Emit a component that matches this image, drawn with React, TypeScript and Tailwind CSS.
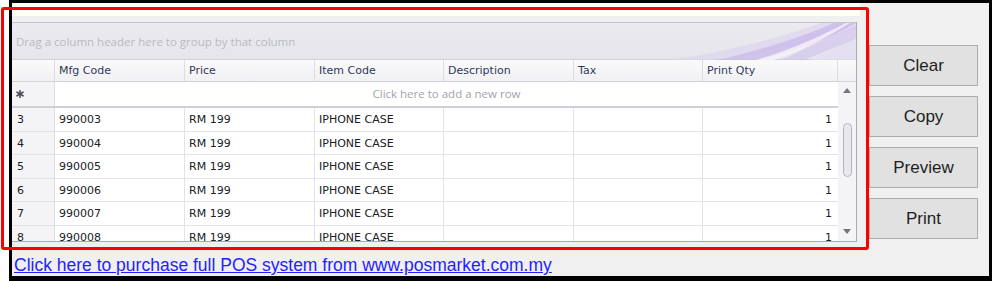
import React from "react";

const columns = [
  { label: "Mfg Code", width: "w-[130px]" },
  { label: "Price", width: "w-[130px]" },
  { label: "Item Code", width: "w-[129px]" },
  { label: "Description", width: "w-[130px]" },
  { label: "Tax", width: "w-[129px]" },
  { label: "Print Qty", width: "w-[135px]" },
];

const rows = [3, 4, 5, 6, 7, 8].map((n) => ({
  no: n,
  mfg: `99000${n}`,
  price: "RM 199",
  item: "IPHONE CASE",
  qty: 1,
}));

function Swoosh() {
  // purple "office 2010" decoration on the right of the group panel
  return (
    <svg className="absolute right-0 top-0" width="200" height="37" viewBox="0 0 200 37">
      <path d="M10 37 C70 30 125 14 165 0 L200 0 L200 5 C155 20 100 33 55 37 Z" fill="#ddd4f0" opacity="0.7" />
      <path d="M60 37 C105 28 150 12 178 0 L200 0 C172 17 135 30 100 37 Z" fill="#c8b8ea" opacity="0.75" />
      <path d="M100 37 C135 27 165 13 190 0 L194 0 C170 15 142 29 118 37 Z" fill="#f6f3fb" opacity="0.8" />
      <path d="M125 37 C150 26 172 13 200 3 L200 16 C178 25 160 32 148 37 Z" fill="#d2c5ee" opacity="0.7" />
      <path d="M155 37 C170 29 184 21 200 17 L200 37 Z" fill="#e4ddf4" opacity="0.7" />
    </svg>
  );
}

function Asterisk() {
  return (
    <svg width="8" height="8" viewBox="0 0 8 8">
      <g stroke="#4d4d58" strokeWidth="1.6" strokeLinecap="round">
        <line x1="4" y1="0.5" x2="4" y2="7.5" />
        <line x1="1" y1="2.2" x2="7" y2="5.8" />
        <line x1="1" y1="5.8" x2="7" y2="2.2" />
      </g>
    </svg>
  );
}

function Scrollbar() {
  return (
    <div className="w-[18px] shrink-0 bg-[#f4f4f7] flex flex-col items-center">
      <svg className="mt-[6px]" width="8" height="5" viewBox="0 0 8 5">
        <path d="M0 5 L4 0 L8 5 Z" fill="#74747c" />
      </svg>
      <div className="mt-[30px] w-[9px] h-[54px] rounded-full border border-[#b4b4bc] bg-[#e9e9ed]" />
      <div className="flex-1" />
      <svg className="mb-[7px]" width="8" height="5" viewBox="0 0 8 5">
        <path d="M0 0 L8 0 L4 5 Z" fill="#74747c" />
      </svg>
    </div>
  );
}

function Grid() {
  return (
    <div className="w-[845px] h-[220px] shrink-0 border-r border-b border-[#a9a9b1] flex flex-col font-['DejaVu_Sans',sans-serif] text-[11px] overflow-hidden">
      {/* group panel */}
      <div className="relative h-[37px] shrink-0 border-t border-[#c4c4cc] bg-gradient-to-b from-[#ebebef] to-[#e6e6ea] flex items-center pl-[4px] pt-[1px]">
        <span className="font-['Open_Sans',sans-serif] text-[11.5px] text-[#b9b9c2]">
          Drag a column header here to group by that column
        </span>
        <Swoosh />
      </div>

      {/* header */}
      <div className="h-[23px] shrink-0 flex border-t border-b border-[#d2d2da] bg-gradient-to-b from-[#fafafb] to-[#f1f1f4] text-[#303a58]">
        <div className="w-[43px] shrink-0 border-r border-[#dcdce3]" />
        {columns.map((c) => (
          <div key={c.label} className={`${c.width} shrink-0 border-r border-[#dcdce3] pl-[4px] pt-[1px] flex items-center`}>
            {c.label}
          </div>
        ))}
        <div className="flex-1" />
      </div>

      {/* body */}
      <div className="flex flex-1 min-h-0">
        <div className="w-[826px] shrink-0 flex flex-col bg-white">
          <div className="h-[26px] shrink-0 flex border-b-2 border-[#cfcfd7]">
            <div className="w-[43px] shrink-0 bg-[#f4f4f7] border-r border-[#dcdce3] flex items-center pl-[4px]">
              <Asterisk />
            </div>
            <div className="flex-1 flex items-center justify-center font-['Open_Sans',sans-serif] text-[11.5px] text-[#a3a3ac]">
              Click here to add a new row
            </div>
          </div>
          {rows.map((r) => (
            <div key={r.no} className="h-[23.5px] shrink-0 flex border-b border-[#e2e2ea] text-[#202024]">
              <div className="w-[43px] shrink-0 bg-[#f4f4f7] border-r border-[#dcdce3] flex items-center pl-[5px] pt-[2px]">
                {r.no}
              </div>
              <div className="w-[130px] shrink-0 border-r border-[#e2e2ea] flex items-center pl-[4px] pt-[2px]">{r.mfg}</div>
              <div className="w-[130px] shrink-0 border-r border-[#e2e2ea] flex items-center pl-[4px] pt-[2px]">{r.price}</div>
              <div className="w-[129px] shrink-0 border-r border-[#e2e2ea] flex items-center pl-[4px] pt-[2px]">{r.item}</div>
              <div className="w-[130px] shrink-0 border-r border-[#e2e2ea]" />
              <div className="w-[129px] shrink-0 border-r border-[#e2e2ea]" />
              <div className="w-[135px] shrink-0 flex items-center justify-end pr-[6px] pt-[2px]">{r.qty}</div>
            </div>
          ))}
        </div>
        <Scrollbar />
      </div>
    </div>
  );
}

function SideButton({ label }: { label: string }) {
  return (
    <button className="w-[109px] h-[41px] bg-[#e1e1e1] border border-[#adadad] text-[17px] text-[#1e1e1e] font-['Liberation_Sans',Arial,sans-serif]">
      {label}
    </button>
  );
}

export default function App() {
  return (
    <div className="relative w-[992px] h-[281px] bg-white overflow-hidden">
      <div className="ml-[9px] w-[983px] h-[281px] border-[3px] border-b-[5px] border-black bg-[#f0f0f0] flex">
        <div className="w-[848px] shrink-0 flex flex-col">
          <div className="h-[13px] bg-white" />
          <div className="h-[6px]" />
          <Grid />
          <a
            href="#"
            className="mt-[12px] ml-[2px] text-[17.5px] leading-[22px] text-[#1f1fff] underline font-['Liberation_Sans',Arial,sans-serif]"
          >
            Click here to purchase full POS system from www.posmarket.com.my
          </a>
        </div>
        <div className="ml-[9px] pt-[42px] flex flex-col gap-[10px]">
          {["Clear", "Copy", "Preview", "Print"].map((b) => (
            <SideButton key={b} label={b} />
          ))}
        </div>
      </div>

      {/* red annotation box */}
      <div className="absolute left-[1px] top-[7px] w-[868px] h-[243px] border-[3px] border-[#ff0000] rounded-[3px] pointer-events-none" />
    </div>
  );
}
